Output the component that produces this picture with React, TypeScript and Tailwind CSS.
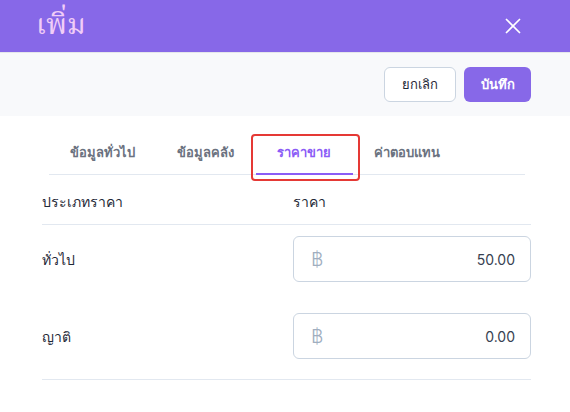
import { X } from 'lucide-react';

const tabs = ['ข้อมูลทั่วไป', 'ข้อมูลคลัง', 'ราคาขาย', 'ค่าตอบแทน'];

const prices = [
  { name: 'ทั่วไป', value: '50.00' },
  { name: 'ญาติ', value: '0.00' },
];

function PriceInput({ value }: { value: string }) {
  return (
    <div className="flex h-[46px] items-center rounded-md border border-[#cbd5e1] bg-white pl-[17px] pr-[15px]">
      <span className="text-[19px] font-light leading-none text-[#a0aec0]">฿</span>
      <span className="ml-auto text-[14px] text-[#374151]">{value}</span>
    </div>
  );
}

export default function App() {
  return (
    <main className="min-h-[412px] w-[570px] bg-white font-['Inter','Noto_Sans',sans-serif]">
      <header className="flex h-[52px] items-center justify-between bg-[#8768e8] pl-[36px] pr-[44px]">
        <h1 className="font-['Noto_Serif_Thai','Norasi','Garuda',serif] text-[29px] leading-none text-[#f1cdf7]">
          เพิ่ม
        </h1>
        <X className="h-[26px] w-[26px] text-white" strokeWidth={1.6} />
      </header>

      <div className="flex h-[64px] items-center justify-end gap-2 border-t border-[#e5e7eb] bg-[#f8f9fb] pr-[39px]">
        <button className="h-[35px] w-[72px] rounded-md border border-[#cbd5e1] bg-white text-[13px] text-[#1f2937]">
          ยกเลิก
        </button>
        <button className="h-[35px] w-[67px] rounded-md bg-[#8768e8] text-[13px] font-semibold text-white">
          บันทึก
        </button>
      </div>

      <div className="pl-[42px] pr-[39px]">
        <div className="ml-[7px] mr-[6px] flex border-b border-[#e2e8f0] pt-[18px]">
          {tabs.map((t, i) => {
            const active = i === 2;
            return (
              <div
                key={t}
                className={
                  'relative flex h-[40px] items-start justify-center pt-[9px] text-[13px] font-semibold ' +
                  (active ? 'px-[22px] text-[#8b5cf6]' : 'px-[21px] text-[#6b7280]')
                }
              >
                {t}
                {active && (
                  <>
                    <span className="absolute bottom-[-1px] left-[1px] right-0 h-[2px] bg-[#8b5cf6]" />
                    <span className="absolute -left-[4px] -right-[7px] top-0 -bottom-[7px] rounded-[4px] border-2 border-[#e53935]" />
                  </>
                )}
              </div>
            );
          })}
        </div>

        <div className="grid grid-cols-[251px_1fr] border-b border-[#e2e8f0] pb-[12px] pt-[16px] text-[14px] text-[#1f2937]">
          <span>ประเภทราคา</span>
          <span>ราคา</span>
        </div>

        <div className="border-b border-[#e2e8f0]">
          {prices.map((p) => (
            <div key={p.name} className="grid h-[77px] grid-cols-[251px_1fr] items-start pt-[11px]">
              <span className="flex h-[46px] items-center text-[14px] text-[#1f2937]">{p.name}</span>
              <PriceInput value={p.value} />
            </div>
          ))}
        </div>
      </div>
    </main>
  );
}
